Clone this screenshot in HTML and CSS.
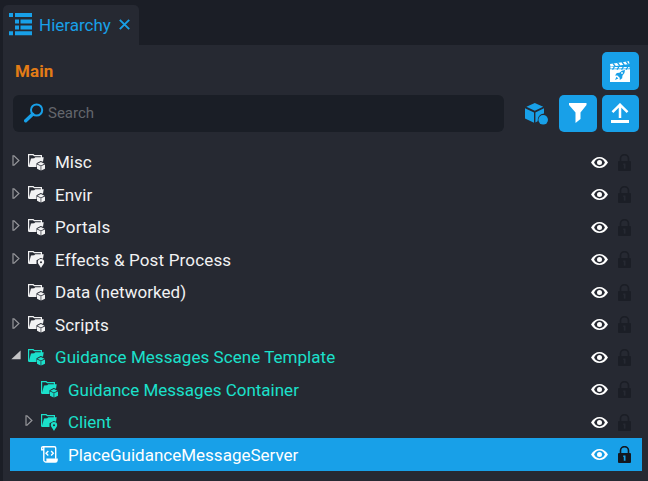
FILE: index.html
```html
<!DOCTYPE html>
<html lang="en">
<head>
<meta charset="utf-8">
<title>Hierarchy</title>
<link rel="stylesheet" href="styles.css">
</head>
<body>
<svg class="defs" aria-hidden="true">
  <symbol id="folder" viewBox="0 0 17 17">
    <path d="M.6 12.5V.7H5.2L6.4 1.7H13.4V4" fill="none" stroke="currentColor" stroke-width="1.2"/>
    <path d="M3 4.6 6.2 4.3 7.3 3.3H15.7L15 7.7 12.7 7 8.5 9.2V13H.6Z" fill="currentColor"/>
  </symbol>
  <symbol id="folder-cube" viewBox="0 0 17 17">
    <use href="#folder"/>
    <path d="M12.9 8 16.5 9.7 12.9 11.4 9.3 9.7ZM9 10.5 12.6 12.1V16.6L9 14.8ZM17 10.5 13.3 12.1V16.6L17 14.8Z" fill="currentColor"/>
  </symbol>
  <symbol id="folder-pin" viewBox="0 0 17 17">
    <use href="#folder"/>
    <path d="M13 8A3.2 3.2 0 0 1 16.2 11.2C16.2 13 14.2 14.3 13 17 11.8 14.3 9.8 13 9.8 11.2A3.2 3.2 0 0 1 13 8ZM13 10.2A1 1 0 1 0 13 12.2 1 1 0 1 0 13 10.2Z" fill="currentColor" fill-rule="evenodd"/>
  </symbol>
  <symbol id="script" viewBox="0 0 17 17">
    <path d="M2.4 3.8H.7V2Q.7.7 2 .7H13.4Q14.7.7 14.7 2V12.8M2.8 1.5V14.5Q3 16 5 16" fill="none" stroke="currentColor" stroke-width="1.4"/>
    <path d="M5.3 12.6H16.8V14.2Q16.6 16.7 14.4 16.7H4.5Q6 15.8 5.3 12.6Z" fill="currentColor"/>
    <path d="M7.3 5 5.1 7.2 7.3 9.4M10.1 5 12.3 7.2 10.1 9.4" fill="none" stroke="currentColor" stroke-width="1.4"/>
  </symbol>
  <symbol id="closed" viewBox="0 0 8 11">
    <path d="M1 .9V10.1H2L6.9 5.5 2 .9Z" fill="none" stroke="#96979b" stroke-width="1.2"/>
  </symbol>
  <symbol id="open" viewBox="0 0 10 10">
    <path d="M9.6.5V9.2H.3Z" fill="#c4c4c6"/>
  </symbol>
  <symbol id="eye" viewBox="0 0 17 11">
    <path d="M0 5.5Q3.4 0 8.5 0T17 5.5Q13.6 11 8.5 11T0 5.5ZM8.5 1.6Q4.8 1.8 3.1 5.5 4.8 9.2 8.5 9.4 12.2 9.2 13.9 5.5 12.2 1.8 8.5 1.6ZM8.5 3A2.5 2.5 0 1 1 8.5 8 2.5 2.5 0 1 1 8.5 3Z" fill="#fff" fill-rule="evenodd"/>
  </symbol>
  <symbol id="lock" viewBox="0 0 13 17">
    <path d="M2.5 8V4.6A4 4 0 0 1 10.5 4.6V8" fill="none" stroke="currentColor" stroke-width="1.6"/>
    <path d="M1 7H12Q13 7 13 8V16Q13 17 12 17H1Q0 17 0 16V8Q0 7 1 7ZM5.2 9.4V11H5.8V14.7H7.5V9.4Z" fill="currentColor" fill-rule="evenodd"/>
  </symbol>
</svg>

<header class="tabs">
  <div class="tab">
    <svg class="tab-icon" viewBox="0 0 24 23"><path d="M0 0H4V4H0ZM6 0H23V4H6ZM6 6.5H10V10.5H6ZM11.5 6.5H23V10.5H11.5ZM6 12.5H10V16.5H6ZM11.5 12.5H23V16.5H11.5ZM0 18.3H4V22.3H0ZM6 18.3H23V22.3H6Z" fill="currentColor"/></svg>
    <span class="tab-title">Hierarchy</span>
    <svg class="close" viewBox="0 0 11 11"><path d="M.8.8 10.2 10.2M10.2.8.8 10.2" stroke="currentColor" stroke-width="1.9"/></svg>
  </div>
</header>

<main class="panel">
  <div class="scene">
    <h1 class="scene-name">Main</h1>
    <button class="button" aria-label="Scenes"><svg class="clapper" width="20" height="21" viewBox="0 0 20 21">
      <path d="M0 8.2H20V21H0ZM0 2.9 19 .2 19.4 3.1.5 5.8ZM.4 6.1H19.6V7.6H.4Z" fill="#fff"/>
      <path d="M3 2.3 5.3 5.3M7.5 1.7 9.8 4.7M12 1 14.3 4M16.2.5 18.4 3.4M2.5 8.7 4.3 6M7 8.7 8.8 6M11.5 8.7 13.3 6M16 8.7 17.8 6" stroke="#18a0e8" stroke-width="1.3"/>
      <path d="M15 9Q11.7 9 9.4 11.7L6.8 12 5 14.4 7.4 14.5 9.7 16.8 9.8 19.1 12.2 17.2 12.4 14.7Q15.1 12.4 15 9ZM6.5 15.8 5 19 8.3 17.5Z" fill="#18a0e8"/>
      <circle cx="12" cy="12" r=".9" fill="#fff"/>
    </svg></button>
  </div>
  <div class="tools">
    <label class="search">
      <svg width="20" height="20" viewBox="0 0 20 20"><circle cx="12.6" cy="7" r="5.6" fill="none" stroke="#18a0e8" stroke-width="2"/><path d="M8.6 11.2 1.7 17.8" stroke="#18a0e8" stroke-width="3.4" stroke-linecap="round"/></svg>
      <input class="search-input" type="text" placeholder="Search">
    </label>
    <svg class="cube" viewBox="0 0 23 22"><path d="M9.8 0 18.2 3.8 9.8 7.7 1.4 3.8ZM0 5.2 9 9.4V19.8L0 15.6ZM19 5.2V10.4Q12.3 11.2 12.6 18.3L10.4 19.6V9.4Z" fill="#18a0e8"/><circle cx="18.2" cy="16.8" r="4.8" fill="#18a0e8"/></svg>
    <button class="button filter" aria-label="Filter"><svg width="18" height="20" viewBox="0 0 18 20"><path d="M0 0H17.5V2L11.5 9.5V16L6.5 20V9.5L0 2Z" fill="#fff"/></svg></button>
    <button class="button" aria-label="Collapse"><svg width="18" height="20" viewBox="0 0 18 20"><path d="M9 15V2M1.5 9.2 9 1.7 16.5 9.2" fill="none" stroke="#fff" stroke-width="2.5"/><path d="M0 17H18V20H0Z" fill="#fff"/></svg></button>
  </div>

  <ul class="tree">
    <li class="row"><svg class="arrow"><use href="#closed"/></svg><svg class="icon"><use href="#folder-cube"/></svg><span class="label">Misc</span><svg class="eye"><use href="#eye"/></svg><svg class="lock"><use href="#lock"/></svg></li>
    <li class="row"><svg class="arrow"><use href="#closed"/></svg><svg class="icon"><use href="#folder-cube"/></svg><span class="label">Envir</span><svg class="eye"><use href="#eye"/></svg><svg class="lock"><use href="#lock"/></svg></li>
    <li class="row"><svg class="arrow"><use href="#closed"/></svg><svg class="icon"><use href="#folder-cube"/></svg><span class="label loose">Portals</span><svg class="eye"><use href="#eye"/></svg><svg class="lock"><use href="#lock"/></svg></li>
    <li class="row"><svg class="arrow"><use href="#closed"/></svg><svg class="icon"><use href="#folder-pin"/></svg><span class="label loose">Effects &amp; Post Process</span><svg class="eye"><use href="#eye"/></svg><svg class="lock"><use href="#lock"/></svg></li>
    <li class="row"><svg class="arrow"></svg><svg class="icon"><use href="#folder-cube"/></svg><span class="label semi">Data (networked)</span><svg class="eye"><use href="#eye"/></svg><svg class="lock"><use href="#lock"/></svg></li>
    <li class="row"><svg class="arrow"><use href="#closed"/></svg><svg class="icon"><use href="#folder-cube"/></svg><span class="label loose">Scripts</span><svg class="eye"><use href="#eye"/></svg><svg class="lock"><use href="#lock"/></svg></li>
    <li class="row template"><svg class="arrow arrow-open"><use href="#open"/></svg><svg class="icon"><use href="#folder-cube"/></svg><span class="label semi">Guidance Messages Scene Template</span><svg class="eye"><use href="#eye"/></svg><svg class="lock"><use href="#lock"/></svg></li>
    <li class="row template child"><svg class="arrow"></svg><svg class="icon"><use href="#folder-cube"/></svg><span class="label">Guidance Messages Container</span><svg class="eye"><use href="#eye"/></svg><svg class="lock"><use href="#lock"/></svg></li>
    <li class="row template child"><svg class="arrow"><use href="#closed"/></svg><svg class="icon"><use href="#folder-pin"/></svg><span class="label">Client</span><svg class="eye"><use href="#eye"/></svg><svg class="lock"><use href="#lock"/></svg></li>
    <li class="row child selected"><svg class="arrow"></svg><svg class="icon"><use href="#script"/></svg><span class="label">PlaceGuidanceMessageServer</span><svg class="eye"><use href="#eye"/></svg><svg class="lock"><use href="#lock"/></svg></li>
  </ul>
</main>
</body>
</html>
```
FILE: styles.css
```css
* { box-sizing: border-box; }
body {
  margin: 0;
  height: 481px;
  overflow: hidden;
  background: #1b1e26;
  color: #f2f2f3;
  font: 17px/20px Roboto, sans-serif;
}
svg { display: block; flex: none; }
.defs { position: absolute; width: 0; height: 0; }
.tabs { height: 45px; padding: 5px 0 0 3px; }
.tab {
  display: flex;
  align-items: center;
  width: 136px;
  height: 40px;
  padding-left: 6px;
  border-radius: 5px 5px 0 0;
  background: #262932;
  color: #18a0e8;
}
.tab-icon { width: 24px; height: 23px; margin-bottom: 1px; }
.tab-title { width: 72px; margin-left: 6px; white-space: nowrap; }
.close { width: 11px; height: 11px; margin: 0 0 1px 8px; }
.panel { height: 436px; margin-left: 3px; padding-top: 7px; background: #262932; }
.scene {
  display: flex;
  align-items: center;
  justify-content: space-between;
  height: 38px;
  padding: 0 9px 0 12px;
}
.scene-name { margin: 0; color: #e37c16; font-size: 17px; line-height: 20px; font-weight: 700; letter-spacing: .1px; }
.button {
  display: flex;
  align-items: center;
  justify-content: center;
  width: 37px;
  height: 38px;
  padding: 0;
  border: 0;
  border-radius: 5px;
  background: #18a0e8;
}
.clapper { margin-right: 2px; }
.tools { display: flex; align-items: center; height: 37px; margin-top: 5px; padding: 0 9px 0 10px; }
.tools .button { height: 37px; padding: 0 1px 2px 0; }
.tools .filter { width: 38px; margin: 0 5px 0 11px; }
.search {
  display: flex;
  align-items: center;
  gap: 4px;
  flex: 1;
  height: 37px;
  padding: 0 0 2px 11px;
  border-radius: 6px;
  background: #1a1e26;
}
.search-input {
  flex: 1;
  min-width: 0;
  padding: 0;
  border: 0;
  outline: 0;
  background: none;
  color: #fff;
  font: 15px/18px Roboto, sans-serif;
}
.search-input::placeholder { color: #63666c; opacity: 1; }
.cube { width: 23px; height: 22px; margin-left: 21px; }
.tree { margin: 13.5px 6px 0 7px; padding: 0; list-style: none; }
.row {
  display: flex;
  align-items: center;
  height: 32.5px;
  padding: .9px 11px 0 2px;
}
.child { padding-left: 15px; }
.arrow { width: 8px; height: 11px; margin: 0 8px 3px 0; }
.arrow-open { width: 10px; height: 10px; margin: 0 7px 4px -1px; }
.icon { width: 17px; height: 17px; }
.label { flex: 1; margin-left: 10px; white-space: nowrap; }
.loose { letter-spacing: .16px; }
.semi { letter-spacing: .05px; }
.eye { width: 17px; height: 11px; }
.lock { width: 13px; height: 17px; margin-left: 10px; color: #1b1e26; }
.template { color: #1be0cb; }
.selected { background: #18a0e8; color: #fff; }
.selected .lock { color: #141820; }
```
